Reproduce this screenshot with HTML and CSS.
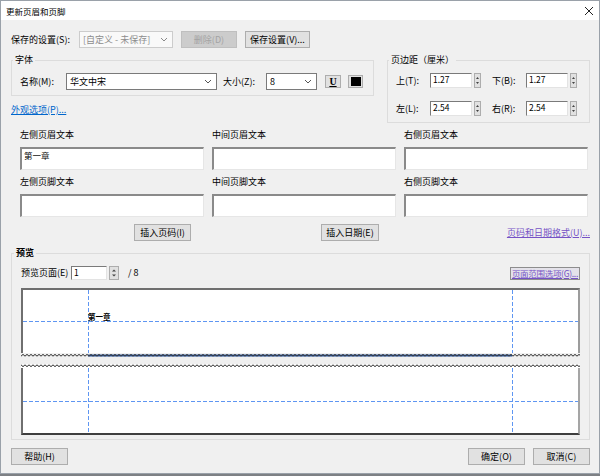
FILE: index.html
```html
<!DOCTYPE html>
<html lang="zh-CN">
<head>
  <meta charset="UTF-8">
  <title>更新页眉和页脚</title>
  <link rel="stylesheet" href="styles.css">
</head>
<body>

  <div class="window">
    <div class="titlebar">
      <span class="title">更新页眉和页脚</span>
      <svg class="close" width="10" height="10" viewBox="0 0 10 10"><path d="M1 1L9 9M9 1L1 9" stroke="#222" stroke-width="1"/></svg>
    </div>

    <div class="content">
      <div class="saved-row">
        <span class="saved-label">保存的设置(S):</span>
        <div class="combo combo-disabled saved-combo">
          <span>[自定义 - 未保存]</span>
          <svg width="8" height="5" viewBox="0 0 8 5"><path d="M1 1l3 3 3-3" fill="none" stroke="#8a8a8a"/></svg>
        </div>
        <div class="btn btn-disabled delete-btn">删除(D)</div>
        <div class="btn save-btn">保存设置(V)...</div>
      </div>

      <div class="top-groups">
        <div class="left-col">
          <fieldset class="group font-group">
            <legend>字体</legend>
            <div class="font-row">
              <span class="name-label">名称(M):</span>
              <div class="combo name-combo">
                <span>华文中宋</span>
                <svg width="8" height="5" viewBox="0 0 8 5"><path d="M1 1l3 3 3-3" fill="none" stroke="#555"/></svg>
              </div>
              <span class="size-label">大小(Z):</span>
              <div class="combo size-combo">
                <span>8</span>
                <svg width="8" height="5" viewBox="0 0 8 5"><path d="M1 1l3 3 3-3" fill="none" stroke="#555"/></svg>
              </div>
              <div class="tool-btn underline-btn">U</div>
              <div class="tool-btn color-btn"><span class="swatch"></span></div>
            </div>
          </fieldset>
          <a class="link look-link">外观选项(P)...</a>
        </div>

        <fieldset class="group margin-group">
          <legend>页边距（厘米）</legend>
          <div class="margin-row">
            <span class="m-label">上(T):</span>
            <div class="field m-field">1.27</div>
            <svg class="spin" width="7" height="15" viewBox="0 0 7 15"><rect x="0.5" y="0.5" width="6" height="14" fill="#e1e1e1" stroke="#adadad"/><path d="M2 6h3L3.5 4z M2 9h3L3.5 11z" fill="#444"/></svg>
            <span class="m-label m-label-right">下(B):</span>
            <div class="field m-field">1.27</div>
            <svg class="spin" width="7" height="15" viewBox="0 0 7 15"><rect x="0.5" y="0.5" width="6" height="14" fill="#e1e1e1" stroke="#adadad"/><path d="M2 6h3L3.5 4z M2 9h3L3.5 11z" fill="#444"/></svg>
          </div>
          <div class="margin-row">
            <span class="m-label">左(L):</span>
            <div class="field m-field">2.54</div>
            <svg class="spin" width="7" height="15" viewBox="0 0 7 15"><rect x="0.5" y="0.5" width="6" height="14" fill="#e1e1e1" stroke="#adadad"/><path d="M2 6h3L3.5 4z M2 9h3L3.5 11z" fill="#444"/></svg>
            <span class="m-label m-label-right">右(R):</span>
            <div class="field m-field">2.54</div>
            <svg class="spin" width="7" height="15" viewBox="0 0 7 15"><rect x="0.5" y="0.5" width="6" height="14" fill="#e1e1e1" stroke="#adadad"/><path d="M2 6h3L3.5 4z M2 9h3L3.5 11z" fill="#444"/></svg>
          </div>
        </fieldset>
      </div>

      <div class="text-grid">
        <div class="text-cell"><div class="text-label">左侧页眉文本</div><div class="text-box">第一章</div></div>
        <div class="text-cell"><div class="text-label">中间页眉文本</div><div class="text-box"></div></div>
        <div class="text-cell"><div class="text-label">右侧页眉文本</div><div class="text-box"></div></div>
        <div class="text-cell"><div class="text-label">左侧页脚文本</div><div class="text-box"></div></div>
        <div class="text-cell"><div class="text-label">中间页脚文本</div><div class="text-box"></div></div>
        <div class="text-cell"><div class="text-label">右侧页脚文本</div><div class="text-box"></div></div>
      </div>

      <div class="insert-row">
        <div class="btn insert-page">插入页码(I)</div>
        <div class="btn insert-date">插入日期(E)</div>
        <a class="link visited format-link">页码和日期格式(U)...</a>
      </div>

      <fieldset class="group preview-group">
        <legend class="bold">预览</legend>
        <div class="preview-row">
          <span class="pv-label">预览页面(E)</span>
          <div class="field pv-field">1</div>
          <svg class="spin pv-spin" width="10" height="14" viewBox="0 0 10 14"><rect x="0.5" y="0.5" width="9" height="13" fill="#e1e1e1" stroke="#adadad"/><path d="M3 5.5h4L5 3.5z M3 8.5h4L5 10.5z" fill="#444"/></svg>
          <span class="pv-total">/ 8</span>
          <a class="link visited range-link">页面范围选项(G)...</a>
        </div>

        <div class="page-head">
          <div class="dash-v" style="left: 65px"></div>
          <div class="dash-v" style="left: 489px"></div>
          <div class="dash-h" style="top: 31px"></div>
          <span class="head-text">第一章</span>
        </div>
        <svg class="wave" width="559" height="4" viewBox="0 0 559 4">
          <defs>
            <pattern id="waveUp" width="4" height="4" patternUnits="userSpaceOnUse"><path d="M0 3.5 Q2 -0.5 4 3.5" fill="none" stroke="#3a3a3a" stroke-width="1"/></pattern>
          </defs>
          <rect x="67" y="1.5" width="424" height="2" fill="#24509a"/>
          <rect width="559" height="4" fill="url(#waveUp)"/>
        </svg>

        <svg class="wave wave-top" width="559" height="4" viewBox="0 0 559 4">
          <defs>
            <pattern id="waveDown" width="4" height="4" patternUnits="userSpaceOnUse"><path d="M0 0.5 Q2 4.5 4 0.5" fill="none" stroke="#3a3a3a" stroke-width="1"/></pattern>
          </defs>
          <rect width="559" height="4" fill="url(#waveDown)"/>
        </svg>
        <div class="page-foot">
          <div class="dash-v" style="left: 65px"></div>
          <div class="dash-v" style="left: 489px"></div>
          <div class="dash-h" style="top: 33px"></div>
        </div>
      </fieldset>

      <div class="bottom-row">
        <div class="btn dlg-btn">帮助(H)</div>
        <div class="btn dlg-btn ok-btn">确定(O)</div>
        <div class="btn dlg-btn">取消(C)</div>
      </div>
    </div>
  </div>

</body>
</html>
```

FILE: styles.css
```css
* {
  box-sizing: border-box;
}

body {
  margin: 0;
  background: #7d8084;
  font-family: "Noto Sans CJK SC", "Noto Sans", sans-serif;
  font-size: 9px;
  line-height: 12px;
  color: #000;
}

.window {
  width: 600px;
  height: 474px;
  background: #f0f0f0;
  border: 1px solid #9aa1a9;
}

.titlebar {
  height: 19px;
  background: #fff;
  display: flex;
  align-items: center;
  justify-content: space-between;
  padding: 0 5px 0 5px;
}

.title {
  font-size: 8.5px;
}

.content {
  padding: 11px 9px 0 10px;
  display: flex;
  flex-direction: column;
}

/* saved settings row */
.saved-row {
  display: flex;
  align-items: center;
  height: 17px;
}

.saved-label {
  width: 68px;
}

.combo {
  height: 17px;
  background: #fff;
  border: 1px solid #7a7a7a;
  display: flex;
  align-items: center;
  justify-content: space-between;
  padding: 0 4px 0 3px;
}

.combo-disabled {
  background: #f9f9f9;
  border-color: #cccccc;
  color: #8d8d8d;
}

.saved-combo {
  width: 94px;
}

.btn {
  height: 17px;
  background: #e1e1e1;
  border: 1px solid #adadad;
  display: flex;
  align-items: center;
  justify-content: center;
}

.btn-disabled {
  background: #cccccc;
  border-color: #bfbfbf;
  color: #a3a3a3;
}

.delete-btn {
  width: 56px;
  margin-left: 8px;
}

.save-btn {
  width: 65px;
  margin-left: 8px;
}

/* group boxes */
.top-groups {
  display: flex;
  margin-top: 6px;
}

.group {
  margin: 0;
  min-width: 0;
  border: 1px solid #dcdcdc;
  padding: 7px 8px 5px 8px;
}

.group legend {
  padding: 0 2px;
  margin-left: -7px;
  line-height: 12px;
  height: 12px;
}

.bold {
  font-weight: bold;
}

.left-col {
  width: 363px;
  display: flex;
  flex-direction: column;
}

.font-row {
  display: flex;
  align-items: center;
  height: 17px;
}

.name-label {
  width: 46px;
}

.name-combo {
  width: 151px;
}

.size-label {
  width: 43px;
  margin-left: 6px;
}

.size-combo {
  width: 51px;
}

.tool-btn {
  height: 13px;
  width: 16px;
  background: #e1e1e1;
  border: 1px solid #adadad;
  display: flex;
  align-items: center;
  justify-content: center;
}

.underline-btn {
  margin-left: 8px;
  font-family: "Liberation Serif", serif;
  font-weight: bold;
  font-size: 10px;
  text-decoration: underline;
  line-height: 10px;
}

.color-btn {
  width: 15px;
  margin-left: 7px;
}

.swatch {
  width: 10px;
  height: 9px;
  background: #000;
}

.link {
  color: #0066cc;
  text-decoration: underline;
  cursor: pointer;
}

.visited {
  color: #7552c6;
}

.look-link {
  margin-top: 8px;
  align-self: flex-start;
}

.margin-group {
  width: 203px;
  margin-left: 13px;
  padding-bottom: 6px;
}

.margin-row {
  display: flex;
  align-items: center;
  height: 15px;
}

.margin-row + .margin-row {
  margin-top: 13px;
}

.m-label {
  width: 34px;
}

.m-label-right {
  margin-left: 11px;
}

.field {
  background: #fff;
  border: 1px solid;
  border-color: #7a7a7a #e3e3e3 #e3e3e3 #7a7a7a;
  padding-left: 2px;
  font-size: 8.5px;
  line-height: 11px;
}

.m-field {
  width: 42px;
  height: 15px;
}

.spin {
  margin-left: 2px;
  flex-shrink: 0;
}

/* header / footer text boxes */
.text-grid {
  display: grid;
  grid-template-columns: repeat(3, 184px);
  column-gap: 8px;
  row-gap: 6px;
  padding-left: 9px;
  margin-top: 6px;
}

.text-label {
  margin-bottom: 6px;
}

.text-box {
  height: 23px;
  background: #fff;
  border-top: 2px solid #8a8a8a;
  border-left: 2px solid #8a8a8a;
  border-right: 1px solid #e6e6e6;
  border-bottom: 1px solid #e6e6e6;
  padding: 0 2px;
  font-size: 8.5px;
}

.insert-row {
  display: flex;
  align-items: center;
  height: 17px;
  margin-top: 7px;
}

.insert-page {
  width: 57px;
  margin-left: 123px;
}

.insert-date {
  width: 58px;
  margin-left: 130px;
}

.format-link {
  margin-left: auto;
}

/* preview */
.preview-group {
  margin-top: 6px;
  padding: 7px 9px 4px 9px;
}

.preview-row {
  display: flex;
  align-items: center;
  height: 14px;
}

.pv-label {
  width: 50px;
}

.pv-field {
  width: 36px;
  height: 14px;
}

.pv-total {
  margin-left: 9px;
}

.range-link {
  margin-left: auto;
  height: 13px;
  background: #e4e2ea;
  border: 1px solid #8d8d8d;
  padding: 0 1px;
  font-size: 8.5px;
  letter-spacing: -0.3px;
  line-height: 11px;
  white-space: nowrap;
}

.page-head {
  position: relative;
  height: 65px;
  margin-top: 8px;
  background: #fff;
  border-top: 2px solid #6f6f6f;
  border-left: 2px solid #6f6f6f;
  border-right: 2px solid #9c9c9c;
}

.page-foot {
  position: relative;
  height: 67px;
  background: #fff;
  border-left: 2px solid #6f6f6f;
  border-right: 2px solid #a5a5a5;
  border-bottom: 2px solid #3f3f3f;
}

.wave {
  display: block;
}

.wave-top {
  margin-top: 7px;
  background: #fff;
}

.dash-v {
  position: absolute;
  top: 0;
  bottom: 0;
  width: 1px;
  background: linear-gradient(to bottom, #5f96f2 4px, transparent 4px) 0 0 / 1px 6px repeat-y;
}

.dash-h {
  position: absolute;
  left: 0;
  right: 0;
  height: 1px;
  background: linear-gradient(to right, #5f96f2 4px, transparent 4px) 0 0 / 6px 1px repeat-x;
}

.head-text {
  position: absolute;
  left: 65px;
  top: 22px;
  font-size: 7.5px;
  font-weight: bold;
  line-height: 9px;
}

.bottom-row {
  display: flex;
  margin-top: 8px;
}

.dlg-btn {
  width: 57px;
}

.ok-btn {
  margin-left: auto;
  margin-right: 8px;
}
```
